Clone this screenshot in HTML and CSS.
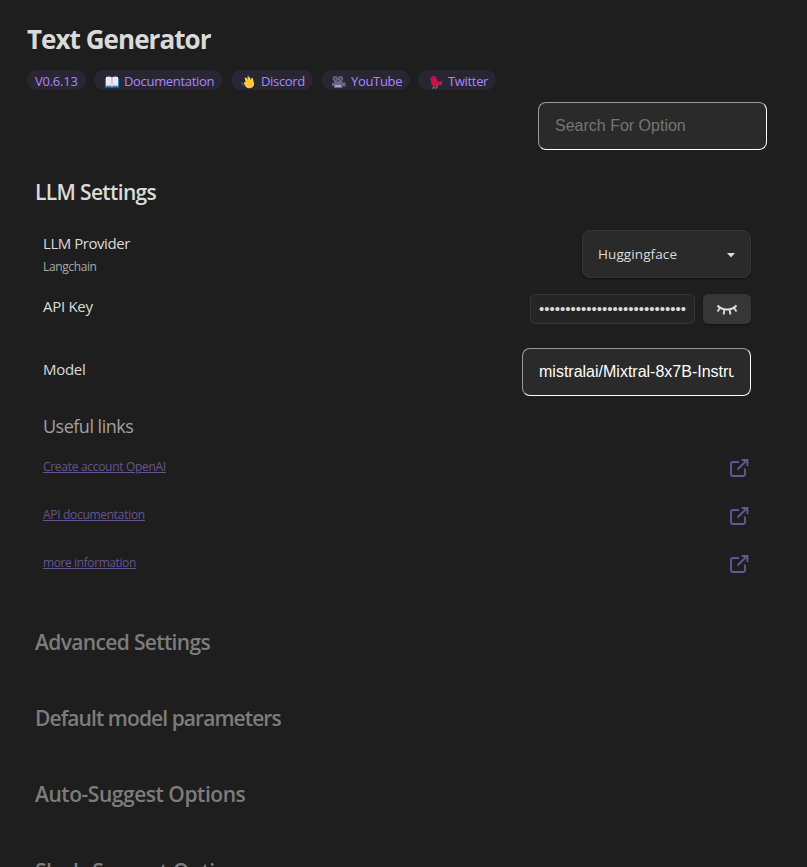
FILE: index.html
```html
<!DOCTYPE html>
<html lang="en">
<head>
<meta charset="utf-8">
<title>Text Generator</title>
<link rel="stylesheet" href="styles.css">
</head>
<body>
<svg class="defs" width="0" height="0" aria-hidden="true">
  <symbol id="ext" viewBox="0 0 24 24" fill="none" stroke="currentColor" stroke-width="1.9">
    <path d="M12 6H6Q4 6 4 8V18Q4 20 6 20H16Q18 20 18 18V12.5"/>
    <path d="M10.5 13.5L20 4M14.5 4H20.5V10"/>
  </symbol>
</svg>
<main class="settings">
  <header>
    <h1>Text Generator</h1>
    <nav class="pills">
      <a class="pill version"><span>V0.6.13</span></a>
      <a class="pill docs"><svg viewBox="0 0 14 14"><path d="M0 3H14V12.5H8L7 13L6 12.5H0Z" fill="#2787b8"/><path d="M1 2Q5 1 7 2.5Q9 1 13 2V11Q9 10 7 11.5Q5 10 1 11Z" fill="#eee8f4"/><path d="M7 2.5V11.5" stroke="#b9afc8"/></svg><span>Documentation</span></a>
      <a class="pill discord"><svg viewBox="0 0 14 14"><path d="M4.5 6L3.6 3Q4.6 1.8 5.7 3L7 5L6.4 1.8Q7.5.5 8.5 2L10 5L10.3 3Q12 2 12 4L13 8Q13.5 12 10 13Q7 14 5 12L2.8 8.5Q2.6 6.7 4.5 7Z" fill="#ffc83d"/><path d="M.7 7Q.8 9.5 2.7 10.5M6.5 .7L8 1.2" stroke="#32669b" fill="none" stroke-width="1.3"/></svg><span>Discord</span></a>
      <a class="pill youtube"><svg viewBox="0 0 14 14"><g fill="#6b6389"><circle cx="3.3" cy="3.6" r="2.6"/><circle cx="8.5" cy="3.6" r="2.6"/><path d="M2 6H10.5V8L13.5 7V12L10.5 11V13H2ZM0 8H2V11H0Z"/></g><circle cx="3.3" cy="3.6" r="1" fill="#37314c"/><circle cx="8.5" cy="3.6" r="1" fill="#37314c"/><path d="M3 10H9V12H3Z" fill="#aaa4bc"/></svg><span>YouTube</span></a>
      <a class="pill twitter"><svg viewBox="0 0 14 14"><path d="M.5 4L2 3Q2.5.8 5 .9Q7.4 1.2 7.5 4L9 7L13 5.8V10L10 10Q8 12 4 10.5Q1.5 9 2 5Z" fill="#cf104c"/><path d="M5 10.5V13H3M8 10.5V13H6" stroke="#b67b34" fill="none"/><path d="M4 3H5" stroke="#391b31"/></svg><span>Twitter</span></a>
    </nav>
    <div class="search-row"><input class="field" type="text" placeholder="Search For Option"></div>
  </header>
  <section class="group">
    <h2 class="open">LLM Settings</h2>
    <div class="body">
      <div class="row provider">
        <div><div class="label">LLM Provider</div><div class="desc">Langchain</div></div>
        <div class="select"><span>Huggingface</span><svg width="8" height="5" viewBox="0 0 8 5"><path d="M0 0H8L4 4.5Z" fill="#dadada"/></svg></div>
      </div>
      <div class="row key">
        <div class="label">API Key</div>
        <div class="key-controls">
          <input class="secret" type="password" value="hf_abcdefghijklmnopqrstuvwxy">
          <button class="eye" aria-label="Show key"><svg width="22" height="14" viewBox="0 0 22 14" fill="none" stroke="#dadada" stroke-width="1.9"><path d="M1.5 2.5Q5 6.5 11 6.5T20.5 2.5"/><path d="M4 5L1.5 8.5M8.5 6.5L7.5 11.5M13.5 6.5L14.5 11.5M18 5L20.5 8.5"/></svg></button>
        </div>
      </div>
      <div class="row model">
        <div class="label">Model</div>
        <input class="field" type="text" value="mistralai/Mixtral-8x7B-Instruct-v0.1">
      </div>
      <h3>Useful links</h3>
      <div class="link"><a>Create account OpenAI</a><svg><use href="#ext"/></svg></div>
      <div class="link"><a>API documentation</a><svg><use href="#ext"/></svg></div>
      <div class="link"><a class="more">more information</a><svg><use href="#ext"/></svg></div>
    </div>
  </section>
  <h2 class="advanced">Advanced Settings</h2>
  <h2 class="params">Default model parameters</h2>
  <h2 class="suggest">Auto-Suggest Options</h2>
  <h2 class="suggest slash">Slash-Suggest Options</h2>
</main>
</body>
</html>
```
FILE: styles.css
```css
* { box-sizing: border-box; }
html, body { height: 100%; }
body { margin: 0; overflow: hidden; background: #1e1e1e; color: #dadada; font-family: "Open Sans", "Noto Sans", sans-serif; }
.defs { position: absolute; }
.settings { height: 100%; overflow: hidden; padding: 20px 40px 0 27px; }
h1, h2, h3 { margin: 0; white-space: nowrap; }
h1 { height: 50px; font-size: 26px; line-height: 39px; font-weight: 700; letter-spacing: -0.95px; }
.pills { display: flex; gap: 8px; height: 20px; }
.pill { display: flex; align-items: center; height: 20px; padding: 0 8px; border-radius: 10px; background: #2a2533; color: #a68af9; font-size: 13px; letter-spacing: -0.33px; white-space: nowrap; }
.pill span { padding-top: 2px; }
.pill svg { flex: none; width: 14px; height: 14px; margin: 4px 5px 0 3px; }
.version { width: 59px; letter-spacing: -0.25px; }
.docs { width: 129px; }
.discord { width: 82px; }
.discord svg { margin-left: 2px; margin-right: 6px; }
.youtube { width: 89px; }
.twitter { width: 78px; }
.search-row { display: flex; justify-content: flex-end; padding-top: 12px; }
.field { width: 229px; height: 48px; padding: 0 16px; border: 1px solid; border-color: #9a9a9a #fff #fff #9a9a9a; border-radius: 8px; outline: 0; background: #2a2a2a; color: #fff; font: 16px "Liberation Sans", sans-serif; }
.field::placeholder { color: #757575; }
h2 { height: 76px; padding-left: 8px; font-size: 21px; line-height: 30px; font-weight: 600; color: #7c7c7c; }
h2.open { height: 45px; color: #dadada; letter-spacing: -0.65px; }
.advanced { letter-spacing: -0.65px; }
.params { letter-spacing: -0.92px; }
.suggest { letter-spacing: -0.46px; }
.slash { padding-top: 1px; }
.group { padding-top: 27px; height: 477px; }
.body { padding: 0 16px; }
.row { display: flex; justify-content: space-between; }
.label { font-size: 15px; line-height: 20px; letter-spacing: -0.45px; }
.desc { margin-top: 6px; font-size: 12px; line-height: 16px; letter-spacing: -0.38px; color: #aaa; }
.provider { height: 72px; padding-top: 8px; }
.provider .label { margin-top: 3px; }
.select { display: flex; align-items: center; justify-content: space-between; width: 169px; height: 48px; padding: 0 15px; border: 1px solid #363636; border-radius: 8px; background: #2a2a2a; box-shadow: 0 1px 2px #111; font-size: 13.5px; letter-spacing: 0.1px; }
.select span { padding-bottom: 1px; }
.select svg { margin-top: 2px; }
.key { height: 46px; }
.key .label { margin-top: 2px; letter-spacing: -0.3px; }
.key-controls { display: flex; gap: 8px; }
.secret { width: 165px; height: 30px; padding: 0 7px 2px 8px; border: 1px solid #363636; border-radius: 5px; outline: 0; background: #252525; color: #dadada; font: 15px "Liberation Sans", sans-serif; }
.eye { display: grid; place-items: center; width: 48px; height: 30px; padding: 2px 0 0; border: 0; border-radius: 5px; background: #363636; box-shadow: 0 1px 2px #111; }
.model { height: 64px; padding-top: 8px; }
.model .label { margin-top: 11px; letter-spacing: -0.3px; }
h3 { height: 52px; padding-top: 7px; font-size: 18px; line-height: 30px; font-weight: 400; letter-spacing: -0.5px; color: #a0a0a0; }
.link { display: flex; justify-content: space-between; height: 48px; color: #655592; }
.link a { font-size: 12px; line-height: 22px; letter-spacing: -0.3px; text-decoration: underline; }
.link .more { letter-spacing: -0.4px; }
.link svg { width: 24px; height: 24px; }
```
